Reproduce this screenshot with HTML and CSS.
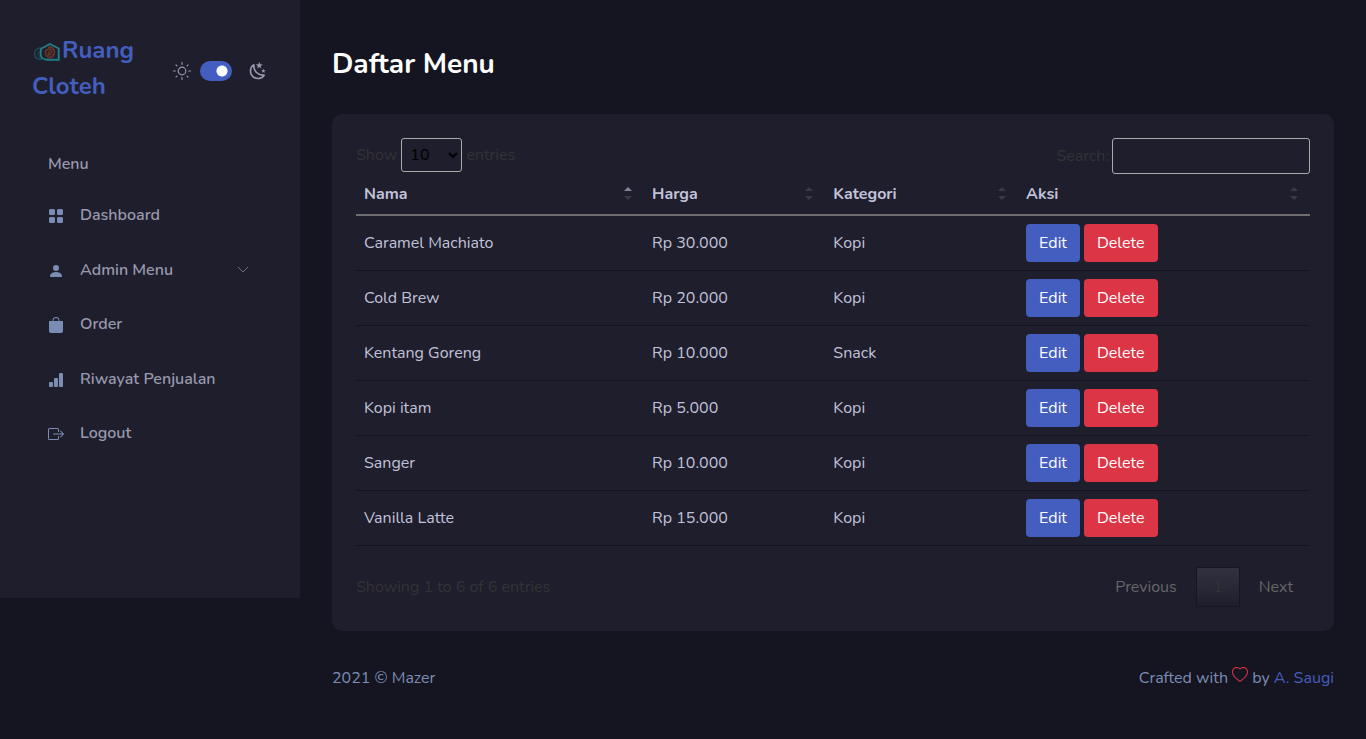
FILE: index.html
```html
<!DOCTYPE html>
<html lang="id">
<head>
<meta charset="utf-8">
<meta name="viewport" content="width=device-width, initial-scale=1">
<title>Daftar Menu - Ruang Cloteh</title>
<link rel="stylesheet" href="styles.css">
</head>
<body>
<div class="app">
  <aside class="sidebar">
    <div class="sidebar-header">
      <a class="brand" href="#"><svg class="brand-logo" viewBox="0 0 30 20" fill="none"><path d="M9 7C5 7 2.500 9.500 2.500 13s3 5.500 7.500 5.500" stroke="#1d4c56" stroke-width="1.500"/><path d="M9 9c-2 .5-3 2-3 4s1.500 4 4 4.500" stroke="#1d4c56"/><path d="M9.500 7.500 18 3l8.700 4.500V18.700H15c-4 0-6.500-2.700-6.500-6 0-2 .2-3.700 1-5.200z" stroke="#218087" stroke-width="1.900"/><path d="M17.800 10.500c-1.500.5-2 3.500-.5 3.500s3.200-3 1.700-5-6-.5-5.500 3 3.500 5 6 4 3.500-5 2.500-7-3-3.500-6-2.500" stroke="#6b3428" stroke-width="1.700"/></svg>Ruang Cloteh</a>
      <div class="theme-toggle">
        <svg class="theme-icon" viewBox="0 0 21 21" fill="none" stroke="currentColor" stroke-width="1.200" stroke-linecap="round" stroke-linejoin="round"><circle cx="10.500" cy="10.500" r="4"/><path d="M10.500 1.500v2M10.500 17.500v2M1.500 10.500h2M17.500 10.500h2M4.200 4.200l1 1M15.800 15.800l1 1M4.200 16.800l1-1M15.800 5.200l1-1"/></svg>
        <input class="switch" type="checkbox" checked aria-label="Mode gelap">
        <svg class="theme-icon" viewBox="0 0 24 24" fill="currentColor"><path d="m17.750 4.090-2.530 1.940.91 3.060-2.630-1.810-2.630 1.810.91-3.060-2.530-1.940L12.440 4l1.060-3 1.060 3 3.190.09m3.500 6.910-1.640 1.250.59 1.980-1.700-1.170-1.700 1.170.59-1.980L15.750 11l2.060-.05L18.500 9l.69 1.950 2.060.05m-2.280 4.950c.83-.08 1.720 1.100 1.190 1.850-.32.45-.66.870-1.080 1.270C15.170 23 8.840 23 4.940 19.070c-3.910-3.900-3.910-10.240 0-14.140.4-.4.820-.76 1.270-1.080.75-.53 1.930.36 1.850 1.190-.27 2.860.69 5.830 2.890 8.020a9.960 9.960 0 0 0 8.020 2.890m-1.640 2.020a12.080 12.080 0 0 1-7.800-3.470c-2.170-2.190-3.330-5-3.490-7.820-2.810 3.140-2.700 7.960.31 10.980 3.020 3.010 7.840 3.120 10.980.31z"/></svg>
      </div>
    </div>
    <nav class="menu">
      <h2 class="menu-title">Menu</h2>
      <ul class="menu-list">
        <li><a class="menu-link" href="#"><svg class="menu-icon" viewBox="0 0 16 16"><path d="M1 2.500A1.500 1.500 0 0 1 2.500 1h3A1.500 1.500 0 0 1 7 2.500v3A1.500 1.500 0 0 1 5.500 7h-3A1.500 1.500 0 0 1 1 5.500zm8 0A1.500 1.500 0 0 1 10.500 1h3A1.500 1.500 0 0 1 15 2.500v3A1.500 1.500 0 0 1 13.500 7h-3A1.500 1.500 0 0 1 9 5.500zm-8 8A1.500 1.500 0 0 1 2.500 9h3A1.500 1.500 0 0 1 7 10.500v3A1.500 1.500 0 0 1 5.500 15h-3A1.500 1.500 0 0 1 1 13.500zm8 0A1.500 1.500 0 0 1 10.500 9h3a1.500 1.500 0 0 1 1.500 1.500v3a1.500 1.500 0 0 1-1.500 1.500h-3A1.500 1.500 0 0 1 9 13.500z"/></svg><span>Dashboard</span></a></li>
        <li><a class="menu-link" href="#"><svg class="menu-icon" viewBox="0 0 16 16"><path d="M3 14s-1 0-1-1 1-4 6-4 6 3 6 4-1 1-1 1zm5-6a3 3 0 1 0 0-6 3 3 0 0 0 0 6"/></svg><span>Admin Menu</span><svg class="chevron" viewBox="0 0 12 12" fill="none" stroke="currentColor"><path d="m1 3 5 5 5-5"/></svg></a></li>
        <li><a class="menu-link" href="#"><svg class="menu-icon" viewBox="0 0 16 16"><path d="M8 1a2.500 2.500 0 0 1 2.500 2.500V4h-5v-.5A2.500 2.500 0 0 1 8 1m3.500 3v-.5a3.500 3.500 0 1 0-7 0V4H1v10a2 2 0 0 0 2 2h10a2 2 0 0 0 2-2V4z"/></svg><span>Order</span></a></li>
        <li><a class="menu-link" href="#"><svg class="menu-icon" viewBox="0 0 16 16"><path d="M1 11a1 1 0 0 1 1-1h2a1 1 0 0 1 1 1v3a1 1 0 0 1-1 1H2a1 1 0 0 1-1-1zm5-4a1 1 0 0 1 1-1h2a1 1 0 0 1 1 1v7a1 1 0 0 1-1 1H7a1 1 0 0 1-1-1zm5-5a1 1 0 0 1 1-1h2a1 1 0 0 1 1 1v12a1 1 0 0 1-1 1h-2a1 1 0 0 1-1-1z"/></svg><span>Riwayat Penjualan</span></a></li>
        <li><a class="menu-link" href="#"><svg class="menu-icon" viewBox="0 0 16 16"><path fill-rule="evenodd" d="M10 12.500a.5.5 0 0 1-.5.5h-8a.5.5 0 0 1-.5-.5v-9a.5.5 0 0 1 .5-.5h8a.5.5 0 0 1 .5.5v2a.5.5 0 0 0 1 0v-2A1.500 1.500 0 0 0 9.500 2h-8A1.500 1.500 0 0 0 0 3.500v9A1.500 1.500 0 0 0 1.500 14h8a1.500 1.500 0 0 0 1.500-1.500v-2a.5.5 0 0 0-1 0z"/><path fill-rule="evenodd" d="M15.854 8.354a.5.5 0 0 0 0-.708l-3-3a.5.5 0 0 0-.708.708L14.293 7.500H5.500a.5.5 0 0 0 0 1h8.793l-2.147 2.146a.5.5 0 0 0 .708.708z"/></svg><span>Logout</span></a></li>
      </ul>
    </nav>
  </aside>

  <div class="page">
    <main>
      <h1 class="page-title">Daftar Menu</h1>
      <section class="card">
        <div class="table-tools">
          <label class="muted">Show <select class="length"><option>10</option><option>25</option><option>50</option></select> entries</label>
          <label class="muted search-label">Search:<input class="search" type="search"></label>
        </div>
        <table class="data-table">
          <colgroup><col class="col-name"><col class="col-price"><col class="col-category"><col class="col-action"></colgroup>
          <thead>
            <tr>
              <th class="sorted">Nama</th>
              <th>Harga</th>
              <th>Kategori</th>
              <th>Aksi</th>
            </tr>
          </thead>
          <tbody>
            <tr><td>Caramel Machiato</td><td>Rp 30.000</td><td>Kopi</td><td><div class="actions"><button class="btn edit">Edit</button><button class="btn delete">Delete</button></div></td></tr>
            <tr><td>Cold Brew</td><td>Rp 20.000</td><td>Kopi</td><td><div class="actions"><button class="btn edit">Edit</button><button class="btn delete">Delete</button></div></td></tr>
            <tr><td>Kentang Goreng</td><td>Rp 10.000</td><td>Snack</td><td><div class="actions"><button class="btn edit">Edit</button><button class="btn delete">Delete</button></div></td></tr>
            <tr><td>Kopi itam</td><td>Rp 5.000</td><td>Kopi</td><td><div class="actions"><button class="btn edit">Edit</button><button class="btn delete">Delete</button></div></td></tr>
            <tr><td>Sanger</td><td>Rp 10.000</td><td>Kopi</td><td><div class="actions"><button class="btn edit">Edit</button><button class="btn delete">Delete</button></div></td></tr>
            <tr><td>Vanilla Latte</td><td>Rp 15.000</td><td>Kopi</td><td><div class="actions"><button class="btn edit">Edit</button><button class="btn delete">Delete</button></div></td></tr>
          </tbody>
        </table>
        <div class="table-footer">
          <p class="muted">Showing 1 to 6 of 6 entries</p>
          <div class="pager">
            <button class="page-btn">Previous</button>
            <button class="page-btn current">1</button>
            <button class="page-btn">Next</button>
          </div>
        </div>
      </section>
    </main>
    <footer class="footer">
      <p>2021 © Mazer</p>
      <p>Crafted with <svg class="heart" viewBox="0 0 16 16" fill="currentColor"><path d="m8 2.748-.717-.737C5.600.281 2.514.878 1.400 3.053c-.523 1.023-.641 2.500.314 4.385.92 1.815 2.834 3.989 6.286 6.357 3.452-2.368 5.365-4.542 6.286-6.357.955-1.886.838-3.362.314-4.385C13.486.878 10.400.280 8.717 2.010zM8 15C-7.333 4.868 3.279-3.040 7.824 1.143q.09.083.176.171a3 3 0 0 1 .176-.17C12.720-3.042 23.333 4.867 8 15"/></svg> by <a href="#">A. Saugi</a></p>
    </footer>
  </div>
</div>
</body>
</html>
```
FILE: styles.css
```css
*, *::before, *::after { box-sizing: border-box; }

body {
  margin: 0;
  background: #151521;
  color: #c2c2d9;
  font: 16px/24px Nunito, Lato, sans-serif;
}

button, input, select { font: inherit; }
a { color: #435ebe; text-decoration: none; }
p { margin: 0; }

.app { display: flex; align-items: flex-start; }

.sidebar {
  flex: 0 0 300px;
  padding-bottom: 142px;
  background: #1e1e2d;
}

.sidebar-header {
  display: flex;
  align-items: center;
  justify-content: space-between;
  gap: 12px;
  padding: 32px 32px 16px;
}

.brand { flex: 0 1 128px; font-size: 24px; font-weight: 700; line-height: 36px; }
.brand-logo { width: 30px; height: 20px; vertical-align: -3px; }

.theme-toggle { display: flex; align-items: center; gap: 8px; padding-top: 6px; color: #9899ac; }
.theme-icon { width: 20px; height: 20px; }

.switch {
  appearance: none;
  width: 32px;
  height: 20px;
  margin: 0;
  border-radius: 10px;
  background: #435ebe radial-gradient(circle at 22px 10px, #fff 5px, transparent 6px);
}
.switch + .theme-icon { margin-left: 8px; }

.menu { padding: 24px 32px 0; }
.menu-title { margin: 8px 16px 16px; color: #9899ac; font-size: 16px; font-weight: 600; line-height: 24px; }
.menu-list { display: grid; gap: 8px; margin: 0; padding: 0; list-style: none; }
.menu-link { display: flex; align-items: center; gap: 16px; padding: 11px 19px 11px 16px; color: #9899ac; font-weight: 600; }
.menu-list li:nth-child(even) { padding-top: 1px; }
.menu-icon { width: 16px; height: 16px; margin-top: 2px; fill: #7c8db5; }
.chevron { width: 12px; height: 12px; margin-left: auto; color: #6c6c78; }

.page { flex: 1; min-width: 0; padding: 48px 32px; }
.page-title { margin: 0 0 34px; color: #fff; font-size: 28px; font-weight: 700; line-height: 32px; }

.card { padding: 24px; border-radius: 10px; background: #1e1e2d; }
.muted { color: #333; }
.table-tools { display: flex; justify-content: space-between; align-items: flex-start; }

.length {
  width: 61px;
  height: 34px;
  padding: 4px;
  border: 1px solid #aaa;
  border-radius: 3px;
  background: transparent;
  color: #000;
}

.search-label { display: flex; align-items: center; gap: 3px; }
.search { width: 198px; height: 36px; padding: 5px; border: 1px solid #aaa; border-radius: 3px; background: transparent; color: #c2c2d9; }

.data-table { width: 100%; border-collapse: separate; border-spacing: 0; table-layout: fixed; }
.col-name { width: 30.200%; }
.col-price { width: 19%; }
.col-category { width: 20.200%; }
.data-table th { position: relative; padding: 8px; border-bottom: 2px solid #6f6d70; text-align: left; font-weight: 700; }
.data-table td { padding: 8px; border-bottom: 1px solid #151521; }

.data-table th::before, .data-table th::after {
  content: "";
  position: absolute;
  right: 12px;
  border: 4px solid transparent;
}
.data-table th::before { top: 9px; border-bottom-color: #393947; }
.data-table th::after { top: 22px; border-top-color: #393947; }
.data-table th.sorted::before { border-bottom-color: #85859a; }

.actions { display: flex; gap: 4px; }
.btn { padding: 6px 12px; border: 1px solid transparent; border-radius: 4px; color: #fff; }
.edit { background: #435ebe; }
.delete { background: #dc3545; }

.table-footer { display: flex; align-items: center; justify-content: space-between; padding-top: 21px; }
.pager { display: flex; gap: 2px; }
.page-btn { min-width: 44px; padding: 7px 16px; border: 1px solid transparent; border-radius: 2px; background: transparent; color: #666; }
.page-btn.current { border-color: #171721; background: linear-gradient(#32323f, #1e1e2d); color: #333; }

.footer { display: flex; justify-content: space-between; padding-top: 35px; color: #7c8db5; }
.heart { width: 16px; height: 16px; color: #dc3545; }
```
